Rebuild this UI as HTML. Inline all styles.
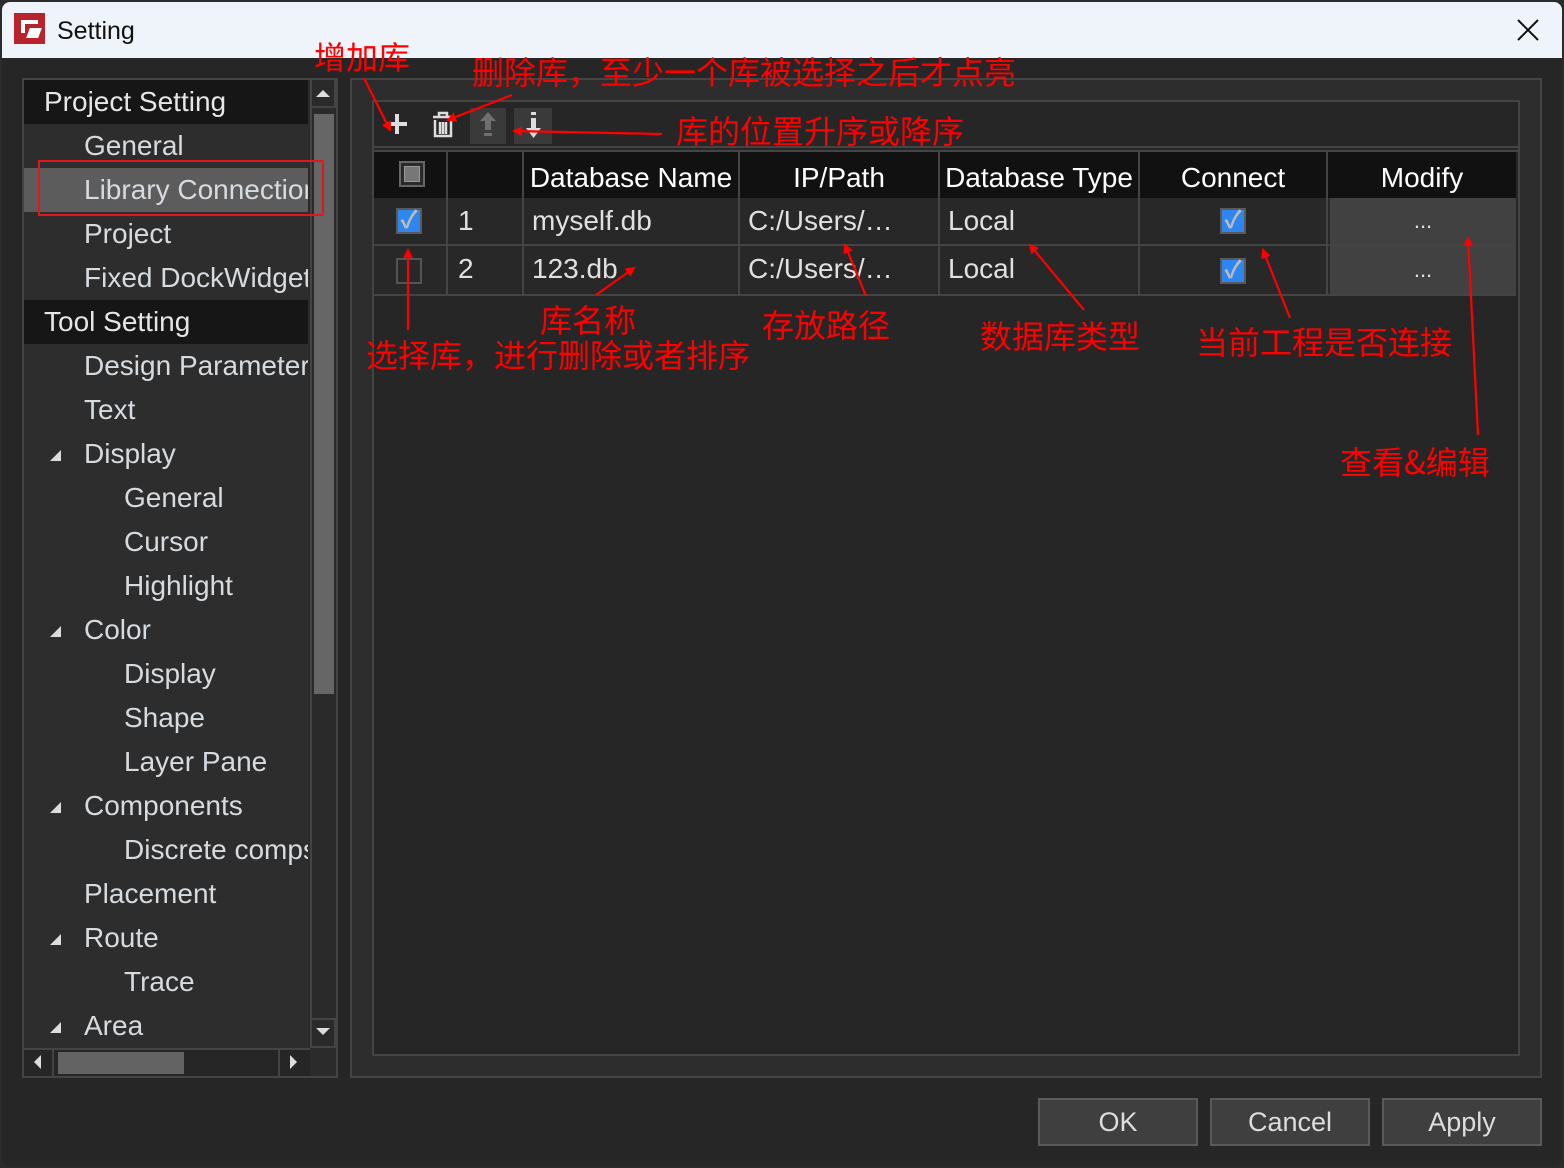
<!DOCTYPE html>
<html><head><meta charset="utf-8"><style>
*{margin:0;padding:0;box-sizing:border-box}
body{width:1564px;height:1168px;background:#2b2b2b;overflow:hidden;font-family:"Liberation Sans","Noto Sans CJK SC",sans-serif;position:relative}
.a{position:absolute}
.win{left:2px;top:2px;width:1560px;height:1164px;background:#262626;border-radius:8px;overflow:hidden}
.title{left:0;top:0;width:1560px;height:56px;background:#eff3fa}
.tree{left:22px;top:78px;width:316px;height:1000px;border:2px solid #444;background:#2b2b2b}
.row{position:absolute;left:0;width:284px;height:44px;line-height:44px;font-size:28px;color:#d6dbe0;white-space:nowrap;overflow:hidden;background:#2d2d2d}
.hd{background:#161616;color:#e6e6e6}
.sel{background:#5c5c5c}
.tri{position:absolute;left:26px;top:18px;width:0;height:0;border-left:11px solid transparent;border-bottom:11px solid #ddd}
.cell{position:absolute;height:100%;border-right:2px solid #444;font-size:28px;color:#e0e0e0;line-height:46px;white-space:nowrap}
.hdr .cell{color:#fff;text-align:center;line-height:52px}
.cb{position:absolute;width:26px;height:26px;border:2px solid #555}
.on{background:#2e86f0;border-color:#5a5a5a;color:#bbb;font-size:24px;line-height:22px;text-align:center;font-weight:bold}
.btn{position:absolute;top:1098px;width:160px;height:48px;border:2px solid #5a5a5a;background:#3f3f3f;color:#ddd;font-size:27px;text-align:center;line-height:44px}
.r{position:absolute;color:#ff0000;font-size:32px;white-space:nowrap;line-height:36px;font-family:"Noto Sans CJK SC",sans-serif}
</style></head><body>
<div class="a win">
<div class="a title"></div>
</div>
<!-- logo -->
<div class="a" style="left:14px;top:13px;width:31px;height:31px;background:#b8242e"></div>
<div class="a" style="left:21px;top:20px;width:17px;height:13px;border:4px solid #fff;border-right:none;border-bottom:none"></div>
<div class="a" style="left:28px;top:28px;width:12px;height:10px;background:#fff;transform:skewX(-20deg)"></div>
<div class="a" style="left:57px;top:17px;font-size:25px;color:#111">Setting</div>
<svg class="a" style="left:1516px;top:18px" width="24" height="24"><path d="M2 2L22 22M22 2L2 22" stroke="#111" stroke-width="2"/></svg>

<div class="a tree">
<div class="row hd" style="top:0"><span style="margin-left:20px">Project Setting</span></div>
<div class="row" style="top:44px"><span style="margin-left:60px">General</span></div>
<div class="row sel" style="top:88px"><span style="margin-left:60px">Library Connection</span></div>
<div class="row" style="top:132px"><span style="margin-left:60px">Project</span></div>
<div class="row" style="top:176px"><span style="margin-left:60px">Fixed DockWidget</span></div>
<div class="row hd" style="top:220px"><span style="margin-left:20px">Tool Setting</span></div>
<div class="row" style="top:264px"><span style="margin-left:60px">Design Parameter</span></div>
<div class="row" style="top:308px"><span style="margin-left:60px">Text</span></div>
<div class="row" style="top:352px"><i class="tri"></i><span style="margin-left:60px">Display</span></div>
<div class="row" style="top:396px"><span style="margin-left:100px">General</span></div>
<div class="row" style="top:440px"><span style="margin-left:100px">Cursor</span></div>
<div class="row" style="top:484px"><span style="margin-left:100px">Highlight</span></div>
<div class="row" style="top:528px"><i class="tri"></i><span style="margin-left:60px">Color</span></div>
<div class="row" style="top:572px"><span style="margin-left:100px">Display</span></div>
<div class="row" style="top:616px"><span style="margin-left:100px">Shape</span></div>
<div class="row" style="top:660px"><span style="margin-left:100px">Layer Pane</span></div>
<div class="row" style="top:704px"><i class="tri"></i><span style="margin-left:60px">Components</span></div>
<div class="row" style="top:748px"><span style="margin-left:100px">Discrete comps</span></div>
<div class="row" style="top:792px"><span style="margin-left:60px">Placement</span></div>
<div class="row" style="top:836px"><i class="tri"></i><span style="margin-left:60px">Route</span></div>
<div class="row" style="top:880px"><span style="margin-left:100px">Trace</span></div>
<div class="row" style="top:924px"><i class="tri"></i><span style="margin-left:60px">Area</span></div>
<!-- vscroll -->
<div class="a" style="left:286px;top:0;width:26px;height:968px;background:#2a2a2a;border-left:2px solid #444"></div>
<div class="a" style="left:286px;top:0;width:26px;height:28px;border:2px solid #444;border-top:none"></div>
<div class="a" style="left:292px;top:10px;border-left:7px solid transparent;border-right:7px solid transparent;border-bottom:7px solid #ddd"></div>
<div class="a" style="left:290px;top:34px;width:20px;height:580px;background:#666"></div>
<div class="a" style="left:286px;top:938px;width:26px;height:30px;border:2px solid #444"></div>
<div class="a" style="left:292px;top:948px;border-left:7px solid transparent;border-right:7px solid transparent;border-top:7px solid #ddd"></div>
<!-- hscroll -->
<div class="a" style="left:0;top:968px;width:286px;height:28px;background:#262626;border-top:2px solid #444"></div>
<div class="a" style="left:0;top:968px;width:30px;height:28px;border-right:2px solid #444"></div>
<div class="a" style="left:10px;top:975px;border-top:7px solid transparent;border-bottom:7px solid transparent;border-right:7px solid #ddd"></div>
<div class="a" style="left:34px;top:972px;width:126px;height:22px;background:#636363"></div>
<div class="a" style="left:254px;top:968px;width:32px;height:28px;border-left:2px solid #444"></div>
<div class="a" style="left:266px;top:975px;border-top:7px solid transparent;border-bottom:7px solid transparent;border-left:7px solid #ddd"></div>
</div>

<!-- right panel -->
<div class="a" style="left:350px;top:78px;width:1192px;height:1000px;border:2px solid #444;background:#2d2d2d"></div>
<div class="a" style="left:372px;top:100px;width:1148px;height:956px;border:2px solid #444;background:#262626"></div>
<div class="a" style="left:374px;top:102px;width:1144px;height:46px;background:#262626;border-bottom:2px solid #444"></div>
<svg class="a" style="left:380px;top:108px" width="180" height="36">
<path d="M17 6V26M7 16H27" stroke="#ddd" stroke-width="4"/>
<g stroke="#ddd" stroke-width="2.5" fill="none"><path d="M53 9H73M59 9V5H67V9"/><path d="M55 12V28H71V12"/><path d="M60 14V26M63 14V26M66 14V26"/></g>
<rect x="90" y="0" width="36" height="36" fill="#3a3a3a"/>
<path d="M108 4L100 13H105V22H111V13H116Z M104 25H112V28H104Z" fill="#6f6f6f"/>
<rect x="134" y="0" width="38" height="36" fill="#3a3a3a"/>
<path d="M151 4H156V7H151Z M151 10H156V20H161L153.5 30L146 20H151Z" fill="#ddd"/>
</svg>

<!-- table -->
<div class="a" style="left:374px;top:150px;width:1144px;height:2px;background:#444"></div>
<div class="a hdr" style="left:374px;top:152px;width:1142px;height:46px;background:#111">
<div class="cell" style="left:0;width:74px"></div>
<div class="cell" style="left:74px;width:76px"></div>
<div class="cell" style="left:150px;width:216px">Database Name</div>
<div class="cell" style="left:366px;width:200px">IP/Path</div>
<div class="cell" style="left:566px;width:200px">Database Type</div>
<div class="cell" style="left:766px;width:188px">Connect</div>
<div class="cell" style="left:954px;width:188px;border:none">Modify</div>
</div>
<div class="a" style="left:399px;top:161px;width:26px;height:26px;border:2px solid #666;background:#2a2a2a"><div style="margin:3px;width:16px;height:16px;background:#777;border:1px solid #999"></div></div>

<div class="a" style="left:374px;top:198px;width:1142px;height:48px;background:#282828;border-bottom:2px solid #444">
<div class="cell" style="left:0;width:74px"></div>
<div class="cell" style="left:74px;width:76px;padding-left:10px">1</div>
<div class="cell" style="left:150px;width:216px;padding-left:8px">myself.db</div>
<div class="cell" style="left:366px;width:200px;padding-left:8px">C:/Users/…</div>
<div class="cell" style="left:566px;width:200px;padding-left:8px">Local</div>
<div class="cell" style="left:766px;width:188px"></div>
<div class="cell" style="left:956px;width:186px;background:#414141;border:none;text-align:center;line-height:46px;font-size:22px">...</div>
</div>
<div class="a" style="left:374px;top:246px;width:1142px;height:50px;background:#282828;border-bottom:2px solid #444">
<div class="cell" style="left:0;width:74px"></div>
<div class="cell" style="left:74px;width:76px;padding-left:10px">2</div>
<div class="cell" style="left:150px;width:216px;padding-left:8px">123.db</div>
<div class="cell" style="left:366px;width:200px;padding-left:8px">C:/Users/…</div>
<div class="cell" style="left:566px;width:200px;padding-left:8px">Local</div>
<div class="cell" style="left:766px;width:188px"></div>
<div class="cell" style="left:956px;width:186px;background:#414141;border:none;text-align:center;line-height:48px;font-size:22px">...</div>
</div>
<div class="cb on" style="left:396px;top:208px">✓</div>
<div class="cb" style="left:396px;top:258px"></div>
<div class="cb on" style="left:1220px;top:208px">✓</div>
<div class="cb on" style="left:1220px;top:258px">✓</div>

<div class="btn" style="left:1038px">OK</div>
<div class="btn" style="left:1210px">Cancel</div>
<div class="btn" style="left:1382px">Apply</div>

<div class="a" style="left:38px;top:160px;width:286px;height:56px;border:2px solid #e0181e"></div>

<div class="r" style="left:314px;top:38px">增加库</div>
<div class="r" style="left:472px;top:53px">删除库，至少一个库被选择之后才点亮</div>
<div class="r" style="left:676px;top:112px">库的位置升序或降序</div>
<div class="r" style="left:540px;top:301px">库名称</div>
<div class="r" style="left:366px;top:336px">选择库，进行删除或者排序</div>
<div class="r" style="left:762px;top:306px">存放路径</div>
<div class="r" style="left:980px;top:317px">数据库类型</div>
<div class="r" style="left:1196px;top:323px">当前工程是否连接</div>
<div class="r" style="left:1340px;top:443px">查看&amp;编辑</div>
<svg class="a" style="left:0;top:0" width="1564" height="1168">
<defs><marker id="m" markerWidth="10" markerHeight="10" refX="8" refY="5" orient="auto" markerUnits="userSpaceOnUse"><path d="M0 0L10 5L0 10Z" fill="#f00"/></marker></defs>
<g stroke="#f00" stroke-width="2.2" fill="none" marker-end="url(#m)">
<line x1="364" y1="78" x2="390" y2="130"/>
<line x1="512" y1="95" x2="448" y2="120"/>
<line x1="662" y1="134" x2="514" y2="131"/>
<line x1="408" y1="330" x2="408" y2="250"/>
<line x1="596" y1="295" x2="634" y2="268"/>
<line x1="866" y1="296" x2="845" y2="245"/>
<line x1="1084" y1="310" x2="1030" y2="245"/>
<line x1="1290" y1="318" x2="1263" y2="250"/>
<line x1="1478" y1="435" x2="1468" y2="238"/>
</g></svg>
</body></html>
